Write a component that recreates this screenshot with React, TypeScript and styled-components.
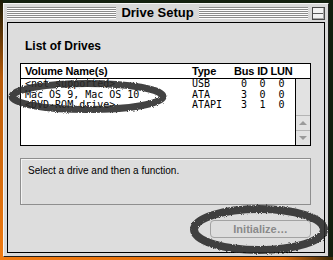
import styled, { createGlobalStyle } from 'styled-components';

const GlobalStyle = createGlobalStyle`
  html, body {
    margin: 0;
    padding: 0;
    width: 333px;
    height: 260px;
    overflow: hidden;
  }
  body {
    background:
      linear-gradient(to bottom, #1a1a06 0, #b85a08 30%, #f07a10 100%) left top / 3px 100% no-repeat,
      linear-gradient(to right, #f07a10 0, #e06a08 85%, #3a2a08 100%) left bottom / 100% 3px no-repeat,
      #13200f;
  }
`;

const Desktop = styled.div`
  position: relative;
  width: 333px;
  height: 260px;
  padding: 3px 0 0 3px;
  box-sizing: border-box;
`;

const Window = styled.div`
  width: 326px;
  height: 254px;
  box-sizing: border-box;
  display: flex;
  flex-direction: column;
  background: #d9d9d9;
  border-top: 1px solid #f6f6f6;
  border-left: 1px solid #f6f6f6;
  border-right: 1px solid #1e1e1e;
  border-bottom: 1px solid #1e1e1e;
  padding: 0 3px 3px 3px;
`;

const TitleBar = styled.div`
  height: 18px;
  display: flex;
  align-items: center;
  gap: 3px;
`;

const Stripes = styled.div`
  flex: 1;
  height: 12px;
  background: repeating-linear-gradient(to bottom, #8c8c8c 0 1px, #ffffff 1px 2px);
`;

const Title = styled.div`
  font-family: 'Liberation Sans', Arial, sans-serif;
  font-weight: bold;
  font-size: 13px;
  line-height: 16px;
  color: #000;
  padding: 0 2px;
`;

const CollapseBox = styled.div`
  width: 13px;
  height: 13px;
  box-sizing: border-box;
  margin-left: 1px;
  border: 1px solid #4a4a4a;
  background: linear-gradient(to bottom, #f2f2f2 0 5px, #5a5a5a 5px 6px, #f2f2f2 6px 100%);
  box-shadow: inset -1px -1px #a8a8a8;
`;

const Content = styled.div`
  flex: 1;
  border: 1px solid #000;
  background: #dddddd;
  padding: 16px 13px 0 12px;
  display: flex;
  flex-direction: column;
`;

const Heading = styled.div`
  font-family: 'Liberation Sans', Arial, sans-serif;
  font-weight: bold;
  font-size: 12px;
  line-height: 14px;
  color: #000;
  padding-left: 5px;
  margin-bottom: 10px;
`;

const ListBox = styled.div`
  width: 291px;
  height: 83px;
  box-sizing: border-box;
  border: 1px solid #000;
  background: #fff;
  display: flex;
  flex-direction: column;
`;

const Columns = styled.div`
  display: grid;
  grid-template-columns: 171px 41px 22px 15px 23px 1fr;
  align-items: center;
`;

const HeaderRow = styled(Columns)`
  height: 14px;
  border-bottom: 1px solid #000;
  font-family: 'Liberation Sans', Arial, sans-serif;
  font-weight: bold;
  font-size: 11px;
  letter-spacing: -0.2px;
  color: #000;
`;

const Cell = styled.div<{ $center?: boolean }>`
  white-space: nowrap;
  text-align: ${(p) => (p.$center ? 'center' : 'left')};
`;

const NameCell = styled(Cell)`
  padding-left: 4px;
`;

const ListBody = styled.div`
  flex: 1;
  display: flex;
`;

const Rows = styled.div`
  flex: 1;
`;

const Row = styled(Columns)`
  height: 10.5px;
  font-family: 'DejaVu Sans Mono', 'Liberation Mono', monospace;
  font-size: 10px;
  line-height: 10.5px;
  color: #000;
`;

const ScrollBar = styled.div`
  width: 14px;
  border-left: 1px solid #000;
  background: #e2e2e2;
  display: flex;
  flex-direction: column;
  justify-content: flex-end;
`;

const ScrollArrow = styled.div<{ $down?: boolean }>`
  height: 14px;
  border-top: 1px solid #b4b4b4;
  display: flex;
  align-items: center;
  justify-content: center;
  &::after {
    content: '';
    width: 0;
    height: 0;
    border-left: 4px solid transparent;
    border-right: 4px solid transparent;
    ${(p) =>
      p.$down ? 'border-top: 4px solid #9a9a9a;' : 'border-bottom: 4px solid #9a9a9a;'}
  }
`;

const InfoBox = styled.div`
  width: 291px;
  height: 47px;
  box-sizing: border-box;
  margin-top: 12px;
  border: 1px solid #8e8e8e;
  box-shadow: inset 1px 1px #f4f4f4;
  padding: 6px 7px;
  font-family: 'Liberation Sans', Arial, sans-serif;
  font-size: 10px;
  line-height: 12px;
  color: #000;
`;

const ButtonRow = styled.div`
  width: 291px;
  display: flex;
  justify-content: flex-end;
  margin-top: 15px;
`;

const Button = styled.button`
  width: 101px;
  height: 18px;
  box-sizing: border-box;
  border: 1px solid #a2a2a2;
  border-radius: 4px;
  background: #dddddd;
  color: #8a8a8a;
  font-family: 'Liberation Sans', Arial, sans-serif;
  font-weight: bold;
  font-size: 11px;
  padding: 0;
`;

const Annotations = styled.svg`
  position: absolute;
  left: 0;
  top: 0;
  pointer-events: none;
`;

const drives = [
  { name: '<not supported>', type: 'USB', bus: '0', id: '0', lun: '0' },
  { name: 'Mac OS 9, Mac OS 10', type: 'ATA', bus: '3', id: '0', lun: '0' },
  { name: '<DVD-ROM drive>', type: 'ATAPI', bus: '3', id: '1', lun: '0' },
];

export default function App() {
  return (
    <Desktop>
      <GlobalStyle />
      <Window>
        <TitleBar>
          <Stripes />
          <Title>Drive Setup</Title>
          <Stripes />
          <CollapseBox />
        </TitleBar>
        <Content>
          <Heading>List of Drives</Heading>
          <ListBox>
            <HeaderRow>
              <NameCell>Volume Name(s)</NameCell>
              <Cell>Type</Cell>
              <Cell $center>Bus</Cell>
              <Cell $center>ID</Cell>
              <Cell $center>LUN</Cell>
            </HeaderRow>
            <ListBody>
              <Rows>
                {drives.map((d) => (
                  <Row key={d.name}>
                    <NameCell>{d.name}</NameCell>
                    <Cell>{d.type}</Cell>
                    <Cell $center>{d.bus}</Cell>
                    <Cell $center>{d.id}</Cell>
                    <Cell $center>{d.lun}</Cell>
                  </Row>
                ))}
              </Rows>
              <ScrollBar>
                <ScrollArrow />
                <ScrollArrow $down />
              </ScrollBar>
            </ListBody>
          </ListBox>
          <InfoBox>Select a drive and then a function.</InfoBox>
          <ButtonRow>
            <Button disabled>Initialize…</Button>
          </ButtonRow>
        </Content>
      </Window>
      <Annotations width="333" height="260" viewBox="0 0 333 260">
        <defs>
          <filter id="rough" x="-10%" y="-40%" width="120%" height="180%">
            <feTurbulence type="fractalNoise" baseFrequency="1.2" numOctaves="2" seed="3" result="noise" />
            <feDisplacementMap in="SourceGraphic" in2="noise" scale="3" />
            <feGaussianBlur stdDeviation="0.6" />
          </filter>
        </defs>
        <g filter="url(#rough)" fill="none" stroke="#2a2a2a" strokeOpacity="0.88">
          <ellipse cx="87.5" cy="96.5" rx="75.5" ry="13" strokeWidth="7" />
          <ellipse cx="259" cy="229.5" rx="65" ry="20.5" strokeWidth="8" />
        </g>
      </Annotations>
    </Desktop>
  );
}
